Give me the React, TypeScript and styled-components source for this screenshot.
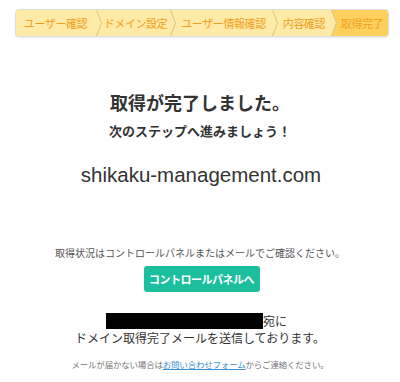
import React, { FC } from "react";
import styled, { createGlobalStyle } from "styled-components";

const GlobalStyle = createGlobalStyle`
  body {
    margin: 0;
    background: #fff;
    font-family: "Noto Sans CJK JP", "Noto Sans", sans-serif;
    color: #333;
  }
`;

const LIGHT = "#ffeaa8";
const DARK = "#ffd05c";

const STEPS = [
  { label: "ユーザー確認", width: 80 },
  { label: "ドメイン設定", width: 68 },
  { label: "ユーザー情報確認", width: 96 },
  { label: "内容確認", width: 53 },
  { label: "取得完了", width: 51 },
];

const Separator: FC<{ left: string; right: string }> = ({ left, right }) => (
  <SepSvg width="6" height="26" viewBox="0 0 6 26">
    <rect x="0" y="0" width="6" height="26" fill={right} />
    <polygon points="0,0 0.5,0 5.5,13 0.5,26 0,26" fill={left} />
    <polyline points="0.5,0 5.5,13 0.5,26" fill="none" stroke="#d9c587" strokeWidth="1" />
  </SepSvg>
);

export default function App() {
  return (
    <>
      <GlobalStyle />
      <Page>
        <StepBar>
          {STEPS.map((s, i) => {
            const current = i === STEPS.length - 1;
            return (
              <React.Fragment key={s.label}>
                {i > 0 && (
                  <Separator left={LIGHT} right={current ? DARK : LIGHT} />
                )}
                <Step $w={s.width} $current={current}>
                  {s.label}
                </Step>
              </React.Fragment>
            );
          })}
        </StepBar>

        <Title>取得が完了しました。</Title>
        <SubTitle>次のステップへ進みましょう！</SubTitle>
        <Domain>shikaku-management.com</Domain>

        <Info>取得状況はコントロールパネルまたはメールでご確認ください。</Info>
        <PanelButton>コントロールパネルへ</PanelButton>

        <AddressLine>
          <Redacted />宛に
        </AddressLine>
        <MailLine>ドメイン取得完了メールを送信しております。</MailLine>

        <Footer>
          メールが届かない場合は<a href="#">お問い合わせフォーム</a>からご連絡ください。
        </Footer>
      </Page>
    </>
  );
}

const Page = styled.div`
  width: 400px;
  height: 382px;
  padding: 9px 0 0 3px;
  box-sizing: border-box;
  display: flex;
  flex-direction: column;
  align-items: center;
`;

const StepBar = styled.div`
  display: flex;
  width: 372px;
  height: 26px;
  border: 1px solid #ddd;
  border-radius: 4px;
  overflow: hidden;
  box-shadow: 0 1px 2px rgba(0, 0, 0, 0.08);
  background: ${LIGHT};
`;

const Step = styled.div<{ $w: number; $current?: boolean }>`
  flex: 0 0 ${(p) => p.$w}px;
  display: flex;
  align-items: center;
  justify-content: center;
  font-size: 11px;
  letter-spacing: -0.4px;
  color: #f0a020;
  white-space: nowrap;
  background: ${(p) => (p.$current ? DARK : LIGHT)};
`;

const SepSvg = styled.svg`
  flex: none;
  display: block;
`;

const Title = styled.h1`
  margin: 52px 0 0 -3px;
  font-size: 18px;
  font-weight: bold;
  line-height: 26px;
`;

const SubTitle = styled.p`
  margin: 6px 0 0 -3px;
  font-size: 13px;
  font-weight: bold;
  line-height: 20px;
`;

const Domain = styled.p`
  margin: 20px 0 0 -1px;
  font-family: "Liberation Sans", Arial, sans-serif;
  font-size: 20.5px;
  line-height: 28px;
  color: #333;
`;

const Info = styled.p`
  margin: 56px 0 0 -3px;
  font-size: 10px;
  line-height: 16px;
  color: #555;
`;

const PanelButton = styled.button`
  margin-top: 5px;
  width: 116px;
  height: 26px;
  border: none;
  border-radius: 3px;
  background: #1bbf9e;
  color: #fff;
  font-family: inherit;
  font-size: 11px;
  font-weight: bold;
  letter-spacing: -0.5px;
  padding: 0;
  cursor: pointer;
`;

const MailLine = styled.p`
  margin: 0 0 0 -3px;
  font-size: 12px;
  line-height: 17px;
  display: flex;
  align-items: center;
`;

const AddressLine = styled(MailLine)`
  margin: 20px 0 0 -10px;
`;

const Redacted = styled.span`
  display: inline-block;
  width: 157px;
  height: 16px;
  background: #000;
`;

const Footer = styled.p`
  margin: 11px 0 0 -3px;
  font-size: 8.5px;
  letter-spacing: -0.2px;
  line-height: 14px;
  color: #777;
  a {
    color: #3a8fd0;
    text-decoration: underline;
  }
`;
